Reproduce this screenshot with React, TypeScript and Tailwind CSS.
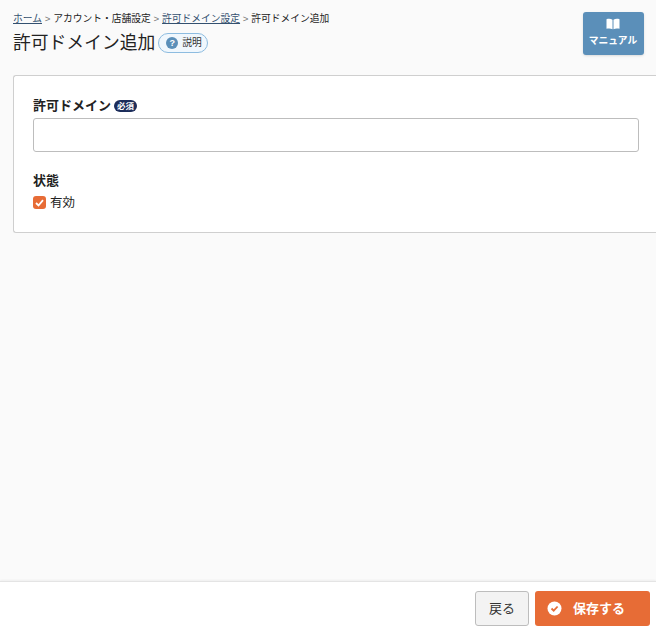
import React from "react";

const font = { fontFamily: '"Liberation Sans", "Noto Sans CJK JP", sans-serif' };

export default function App() {
  return (
    <div style={font} className="w-[656px] h-[632px] overflow-hidden flex flex-col bg-[#fafafa] text-[#222]">
      <main className="flex-1 min-h-0 flex flex-col pl-[13px]">
        <header className="h-[75px] flex items-start justify-between pr-3 shrink-0">
          <div className="pt-[12px]">
            <nav className="flex items-center text-[9.75px] leading-[14px] h-[14px] text-[#222]">
              <a className="underline text-[#33506f]">ホーム</a>
              <span className="mx-[2.8px] text-[#777]">&gt;</span>
              <span>アカウント・店舗設定</span>
              <span className="mx-[2.8px] text-[#777]">&gt;</span>
              <a className="underline text-[#33506f]">許可ドメイン設定</a>
              <span className="mx-[2.8px] text-[#777]">&gt;</span>
              <span>許可ドメイン追加</span>
            </nav>
            <div className="flex items-center mt-[3px] h-[28px]">
              <h1 className="text-[17.8px] leading-[28px] font-normal">許可ドメイン追加</h1>
              <span className="ml-[3px] flex items-center h-[20px] w-[50px] rounded-full border border-[#8dbce0] bg-[#f0f7fd] pl-[7px]">
                <span className="w-[12px] h-[12px] rounded-full bg-[#5b8fb9] text-white text-[9px] leading-[12px] font-bold text-center">?</span>
                <span className="ml-[4px] text-[9.75px] leading-none text-[#333]">説明</span>
              </span>
            </div>
          </div>
          <button className="mt-[12px] w-[61px] h-[43px] rounded-[3px] bg-[#5b8fb9] text-white flex flex-col items-center pt-[6px] pr-[1px] shadow-sm">
            <svg width="14" height="12" viewBox="0 0 14 12" fill="#fff">
              <path d="M0.5 1.2C2.5 0.6 5 0.7 6.5 1.7V11.2C5 10.3 2.5 10.2 0.5 10.8Z" />
              <path d="M13.5 1.2C11.5 0.6 9 0.7 7.5 1.7V11.2C9 10.3 11.5 10.2 13.5 10.8Z" />
            </svg>
            <span className="text-[9.75px] leading-[12px] font-bold mt-[5px]">マニュアル</span>
          </button>
        </header>

        <section className="h-[158px] shrink-0 bg-white border border-[#cfcfcf] border-r-0 rounded-l-[3px] pl-[19px] pr-[17px] pt-[21px]">
          <div className="flex items-center h-[18px]">
            <label className="text-[13px] font-bold leading-[18px]">許可ドメイン</label>
            <span className="ml-[3px] h-[12px] w-[23px] rounded-full bg-[#1c2d5a] text-white text-[8.5px] leading-[12px] text-center font-bold">必須</span>
          </div>
          <input className="block mt-[3px] w-full h-[34px] rounded-[3px] border border-[#bdbdbd] bg-white outline-none" />
          <div className="mt-[20px] text-[13px] font-bold leading-[18px]">状態</div>
          <label className="mt-[4px] flex items-center h-[18px]">
            <span className="w-[13px] h-[13px] -mt-[1px] rounded-[3px] bg-[#e76c36] flex items-center justify-center">
              <svg width="9" height="8" viewBox="0 0 9 8" fill="none" stroke="#fff" strokeWidth="1.8">
                <path d="M1 4L3.5 6.5L8 1.2" />
              </svg>
            </span>
            <span className="ml-[4px] text-[12.5px] leading-[18px]">有効</span>
          </label>
        </section>
      </main>

      <footer className="h-[51px] shrink-0 bg-white border-t border-[#e4e4e4] shadow-[0_-1px_2px_rgba(0,0,0,0.05)] flex items-start justify-end gap-[6px] pt-[9px] pr-[6px]">
        <button className="w-[54px] h-[35px] rounded-[3px] border border-[#bdbdbd] bg-[#f3f3f3] text-[13px] text-[#333]">戻る</button>
        <button className="w-[115px] h-[35px] rounded-[3px] bg-[#e76c36] text-white flex items-center pl-[12px]">
          <svg width="15" height="15" viewBox="0 0 15 15">
            <circle cx="7.5" cy="7.5" r="7" fill="#fff" />
            <path d="M4.5 7.5L6.7 9.7L10.6 5.5" fill="none" stroke="#e76c36" strokeWidth="1.8" />
          </svg>
          <span className="ml-[11px] text-[13px] font-bold">保存する</span>
        </button>
      </footer>
    </div>
  );
}
